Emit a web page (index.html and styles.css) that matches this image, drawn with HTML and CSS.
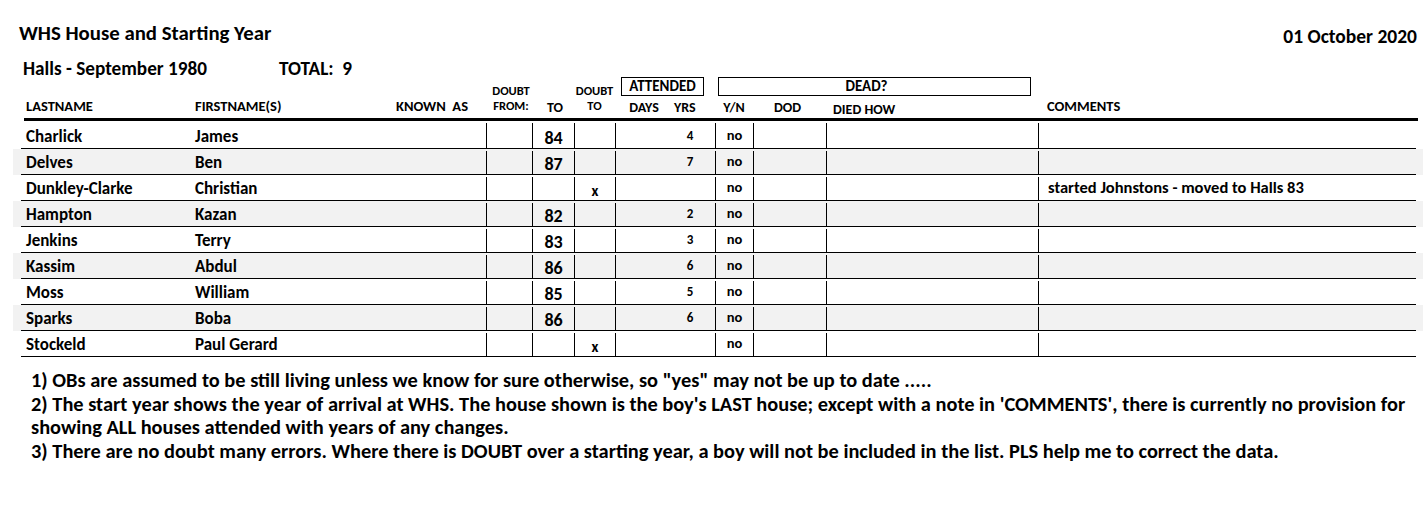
FILE: index.html
```html
<!DOCTYPE html>
<html lang="en">
<head>
<meta charset="utf-8">
<title>WHS House and Starting Year</title>
<link rel="stylesheet" href="styles.css">
</head>
<body>
<div class="page">
  <header class="top">
    <h1 class="title">WHS House and Starting Year</h1>
    <div class="date">01 October 2020</div>
  </header>
  <div class="sub">
    <span class="house">Halls - September 1980</span>
    <span class="total">TOTAL:&nbsp; 9</span>
  </div>

  <div class="thead">
    <div class="h2 hl">LASTNAME</div>
    <div class="h2 hl">FIRSTNAME(S)</div>
    <div class="h2 hl known">KNOWN&nbsp; AS</div>
    <div class="h1 hs c4">DOUBT</div>
    <div class="h1 hs c6">DOUBT</div>
    <div class="box att"><span>ATTENDED</span></div>
    <div class="box dead"><span>DEAD?</span></div>
    <div class="h2 hs c4">FROM:</div>
    <div class="h2 hm to">TO</div>
    <div class="h2 hs c6">TO</div>
    <div class="h2 hm days">DAYS</div>
    <div class="h2 hm yrs">YRS</div>
    <div class="h2 hm yn">Y/N</div>
    <div class="h2 hm dod">DOD</div>
    <div class="h2 hm how">DIED HOW</div>
    <div class="h2 hl cmh">COMMENTS</div>
  </div>
  <div class="rule"></div>

  <div class="tbody">
    <div class="row"><div class="cells first">
      <div class="c name">Charlick</div><div class="c name">James</div><div class="c"></div>
      <div class="c v"></div><div class="c v yr">84</div><div class="c v"></div>
      <div class="c v"></div><div class="c num">4</div>
      <div class="c v yn">no</div><div class="c v"></div><div class="c v"></div><div class="c v cm"></div>
    </div></div>
    <div class="row alt"><div class="cells">
      <div class="c name">Delves</div><div class="c name">Ben</div><div class="c"></div>
      <div class="c v"></div><div class="c v yr">87</div><div class="c v"></div>
      <div class="c v"></div><div class="c num">7</div>
      <div class="c v yn">no</div><div class="c v"></div><div class="c v"></div><div class="c v cm"></div>
    </div></div>
    <div class="row"><div class="cells">
      <div class="c name">Dunkley-Clarke</div><div class="c name">Christian</div><div class="c"></div>
      <div class="c v"></div><div class="c v yr"></div><div class="c v x">x</div>
      <div class="c v"></div><div class="c num"></div>
      <div class="c v yn">no</div><div class="c v"></div><div class="c v"></div><div class="c v cm">started Johnstons - moved to Halls 83</div>
    </div></div>
    <div class="row alt"><div class="cells">
      <div class="c name">Hampton</div><div class="c name">Kazan</div><div class="c"></div>
      <div class="c v"></div><div class="c v yr">82</div><div class="c v"></div>
      <div class="c v"></div><div class="c num">2</div>
      <div class="c v yn">no</div><div class="c v"></div><div class="c v"></div><div class="c v cm"></div>
    </div></div>
    <div class="row"><div class="cells">
      <div class="c name">Jenkins</div><div class="c name">Terry</div><div class="c"></div>
      <div class="c v"></div><div class="c v yr">83</div><div class="c v"></div>
      <div class="c v"></div><div class="c num">3</div>
      <div class="c v yn">no</div><div class="c v"></div><div class="c v"></div><div class="c v cm"></div>
    </div></div>
    <div class="row alt"><div class="cells">
      <div class="c name">Kassim</div><div class="c name">Abdul</div><div class="c"></div>
      <div class="c v"></div><div class="c v yr">86</div><div class="c v"></div>
      <div class="c v"></div><div class="c num">6</div>
      <div class="c v yn">no</div><div class="c v"></div><div class="c v"></div><div class="c v cm"></div>
    </div></div>
    <div class="row"><div class="cells">
      <div class="c name">Moss</div><div class="c name">William</div><div class="c"></div>
      <div class="c v"></div><div class="c v yr">85</div><div class="c v"></div>
      <div class="c v"></div><div class="c num">5</div>
      <div class="c v yn">no</div><div class="c v"></div><div class="c v"></div><div class="c v cm"></div>
    </div></div>
    <div class="row alt"><div class="cells">
      <div class="c name">Sparks</div><div class="c name">Boba</div><div class="c"></div>
      <div class="c v"></div><div class="c v yr">86</div><div class="c v"></div>
      <div class="c v"></div><div class="c num">6</div>
      <div class="c v yn">no</div><div class="c v"></div><div class="c v"></div><div class="c v cm"></div>
    </div></div>
    <div class="row"><div class="cells">
      <div class="c name">Stockeld</div><div class="c name">Paul Gerard</div><div class="c"></div>
      <div class="c v"></div><div class="c v yr"></div><div class="c v x">x</div>
      <div class="c v"></div><div class="c num"></div>
      <div class="c v yn">no</div><div class="c v"></div><div class="c v"></div><div class="c v cm"></div>
    </div></div>
  </div>

  <div class="notes">
    <p>1) OBs are assumed to be still living unless we know for sure otherwise, so "yes" may not be up to date .....</p>
    <p>2) The start year shows the year of arrival at WHS. The house shown is the boy's LAST house; except with a note in 'COMMENTS', there is currently no provision for<br>showing ALL houses attended with years of any changes.</p>
    <p>3) There are no doubt many errors. Where there is DOUBT over a starting year, a boy will not be included in the list. PLS help me to correct the data.</p>
  </div>
</div>
</body>
</html>
```

FILE: styles.css
```css
* { box-sizing: border-box; }
body {
  margin: 0;
  background: #fff;
  color: #000;
  font-family: Carlito, Lato, "Liberation Sans", sans-serif;
  font-weight: 700;
}
.page { width: 1423px; }

.top {
  display: flex;
  justify-content: space-between;
  align-items: flex-start;
  height: 56px;
  padding: 0 6px 0 19px;
}
.title {
  margin: 0;
  font-size: 20.8px;
  line-height: 20px;
  padding-top: 23px;
  font-weight: 700;
}
.date {
  font-size: 19.5px;
  line-height: 20px;
  padding-top: 26px;
}

.sub {
  display: flex;
  height: 21px;
  padding-top: 4px;
  padding-left: 23px;
  font-size: 19.2px;
  line-height: 18px;
}
.house { width: 256px; }

.thead {
  display: grid;
  grid-template-columns: 169px 200px 96px 46px 42px 41px 50px 50px 38px 73px 212px 378px;
  grid-template-rows: 20px 21px;
  margin-left: 21px;
  width: 1395px;
}
.h1 { grid-row: 1; align-self: end; }
.h2 { grid-row: 2; align-self: end; padding-bottom: 5px; }
.hl { font-size: 14.5px; line-height: 14px; padding-left: 5px; }
.hs { font-size: 12.5px; line-height: 12px; text-align: center; }
.hm { font-size: 14px; line-height: 14px; text-align: center; }
.h1.hs { padding-bottom: 0; }
.h2.hs { padding-bottom: 6px; }
.known { grid-column: 3; padding-left: 6px; }
.c4 { grid-column: 4; padding-left: 4px; }
.to { grid-column: 5; padding-bottom: 3px; padding-left: 4px; }
.c6 { grid-column: 6; }
.days { grid-column: 7; padding-bottom: 3px; padding-left: 8px; }
.yrs { grid-column: 8; padding-bottom: 3px; text-align: left; padding-left: 9px; }
.yn { grid-column: 9; }
.h2.yn { padding-bottom: 3px; }
.dod { grid-column: 10; padding-bottom: 3px; text-align: left; padding-left: 21px; }
.how { grid-column: 11; padding-bottom: 1px; text-align: left; padding-left: 7px; }
.cmh { grid-column: 12; padding-left: 9px; }

.box {
  grid-row: 1;
  border: 1px solid #000;
  display: flex;
  align-items: center;
  justify-content: center;
  font-size: 15px;
  line-height: 15px;
}
.att { grid-column: 7 / span 2; margin: 0 11px 1px 6px; }
.dead { grid-column: 9 / span 3; margin: 0 7px 1px 3px; padding-right: 16px; }

.rule {
  margin-left: 24px;
  width: 1394px;
  height: 3px;
  background: #000;
}

.row { margin-left: 13px; width: 1410px; }
.row.alt { background: #f2f2f2; }
.cells {
  display: grid;
  grid-template-columns: 169px 200px 96px 46px 42px 41px 50px 50px 38px 73px 212px 378px;
  margin-left: 8px;
  width: 1395px;
  height: 26px;
  border-bottom: 1px solid #000;
}
.cells.first { height: 28px; }
.c {
  display: flex;
  align-items: flex-end;
  font-size: 17px;
  line-height: 16px;
  padding-bottom: 3px;
  white-space: nowrap;
}
.c.v { border-left: 1px solid #000; margin-top: 2px; }
.name { padding-left: 5px; }
.yr { justify-content: center; font-size: 18px; padding-bottom: 2px; }
.x { justify-content: center; font-size: 15px; padding-bottom: 1px; }
.num { justify-content: center; font-size: 13px; padding-bottom: 4px; }
.c.yn { justify-content: center; font-size: 14.5px; padding-bottom: 5px; }
.cm { padding-left: 9px; font-size: 16.5px; padding-bottom: 5px; }

.notes {
  padding: 12px 0 0 31px;
  font-size: 20.4px;
  line-height: 23.6px;
  white-space: nowrap;
}
.notes p { margin: 0; }
```
